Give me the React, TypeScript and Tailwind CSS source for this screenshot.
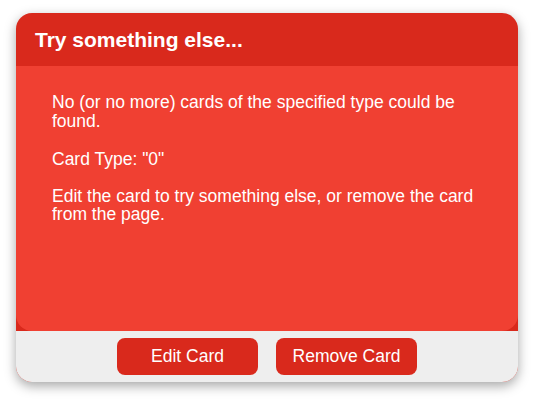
export default function App() {
  return (
    <div className="min-h-[400px] w-[535px] bg-white pt-[13px] pl-4 font-['Liberation_Sans',Arial,sans-serif]">
      <div className="flex w-[502px] flex-col overflow-hidden rounded-2xl bg-[#d9291c] shadow-[0_4px_12px_rgba(0,0,0,0.35)]">
        <div className="h-[53px] px-[19px] pt-[15px]">
          <h1 className="text-[21px] leading-6 font-bold text-white">Try something else...</h1>
        </div>
        <div className="h-[265px] rounded-b-2xl bg-[#f04032] px-9 pt-[27px] text-[17.5px] leading-[18.5px] text-white">
          <p>No (or no more) cards of the specified type could be found.</p>
          <p className="mt-5">Card Type: "0"</p>
          <p className="mt-[18px]">
            Edit the card to try something else, or remove the card from the page.
          </p>
        </div>
        <div className="flex h-[51px] items-center justify-center gap-[18px] bg-[#eeeeee]">
          <button className="h-[37px] w-[141px] rounded-lg bg-[#d9291c] text-[17.5px] text-white">
            Edit Card
          </button>
          <button className="h-[37px] w-[141px] rounded-lg bg-[#d9291c] text-[17.5px] text-white">
            Remove Card
          </button>
        </div>
      </div>
    </div>
  )
}
